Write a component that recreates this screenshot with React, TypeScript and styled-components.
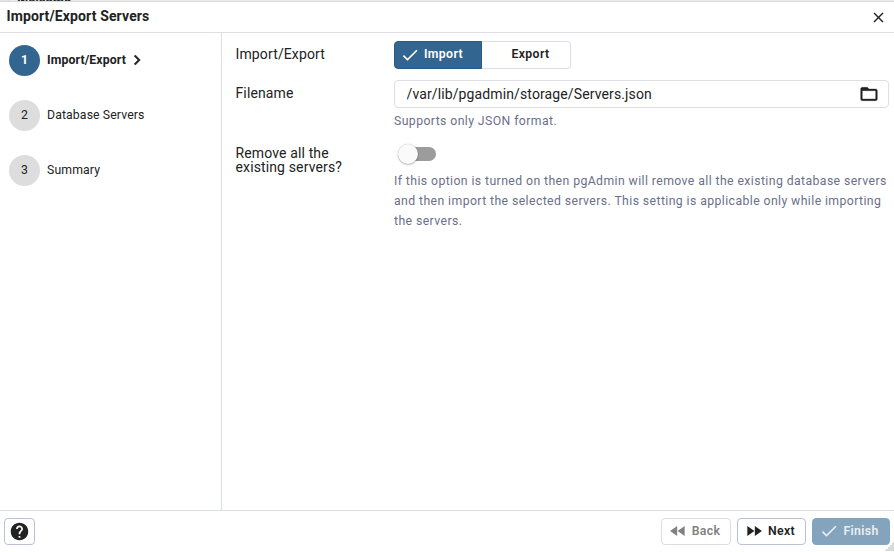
import React from "react";
import styled, { createGlobalStyle } from "styled-components";

const GlobalStyle = createGlobalStyle`
  * { box-sizing: border-box; }
  body { margin: 0; background: #fff; }
  body, button, input { font-family: Roboto, "Liberation Sans", sans-serif; color: #222; }
  button, input { margin: 0; }
`;

const Window = styled.div`
  display: flex;
  flex-direction: column;
  width: 894px;
  height: 552px;
  overflow: hidden;
  background: #fff;
  position: relative;
`;

const TabStrip = styled.div`
  flex: none;
  height: 2px;
  overflow: hidden;
  background: #ebebeb;
  border-bottom: 1px solid #d9dadb;
  display: flex;
`;

const TabEdge = styled.div`
  width: 10px;
  background: #dfe2e8;
`;

const TabTitle = styled.span`
  margin: -4px 0 0 7px;
  font-size: 13px;
  line-height: 12px;
  font-weight: 700;
`;

const Header = styled.header`
  flex: none;
  height: 31px;
  display: flex;
  align-items: center;
  justify-content: space-between;
  padding: 0 7px 2px 6.5px;
  border-bottom: 1px solid #dddfe8;
`;

const Title = styled.div`
  font-size: 14px;
  line-height: 18px;
  font-weight: 700;
  letter-spacing: 0.13px;
`;

const IconButton = styled.button`
  display: flex;
  border: 0;
  padding: 0;
  background: none;
`;

const CloseButton = styled(IconButton)`
  margin-top: 2px;
`;

const Body = styled.main`
  flex: 1;
  min-height: 0;
  display: flex;
`;

const Sidebar = styled.nav`
  flex: none;
  width: 222px;
  border-right: 1px solid #dddfe8;
  padding: 12px 9px;
  display: flex;
  flex-direction: column;
  gap: 24px;
`;

const Step = styled.div<{ $active?: boolean }>`
  height: 31px;
  display: flex;
  align-items: center;
  font-size: 12.25px;
  letter-spacing: 0.12px;
  font-weight: ${(p) => (p.$active ? 700 : 400)};
`;

const StepText = styled.span`
  margin: -2px 0 0 7px;
`;

const StepNumber = styled.span<{ $active?: boolean }>`
  width: 31px;
  height: 31px;
  border-radius: 50%;
  display: flex;
  align-items: center;
  justify-content: center;
  padding-bottom: 2px;
  background: ${(p) => (p.$active ? "#326690" : "#ddd")};
  color: ${(p) => (p.$active ? "#fff" : "#222")};
`;

const StepArrow = styled.span`
  display: flex;
  margin: -1px 0 0 1px;
`;

const Form = styled.section`
  flex: 1;
  padding: 8px 5px 0 13.5px;
`;

const Row = styled.div<{ $gap: number }>`
  display: grid;
  grid-template-columns: 158.5px 1fr;
  margin-bottom: ${(p) => p.$gap}px;
`;

const Label = styled.label<{ $top: number }>`
  font-size: 14px;
  line-height: 14px;
  letter-spacing: 0.13px;
  padding: ${(p) => p.$top}px 30px 0 0;
`;

const ToggleGroup = styled.div`
  display: flex;
  width: 177px;
  height: 28px;
`;

const ToggleButton = styled.button<{ $selected?: boolean }>`
  display: flex;
  align-items: center;
  justify-content: ${(p) => (p.$selected ? "flex-start" : "center")};
  width: ${(p) => (p.$selected ? 88 : 89)}px;
  padding: ${(p) => (p.$selected ? "0 0 2px 5px" : "0 0 2px 9px")};
  border: 1px solid ${(p) => (p.$selected ? "#2c5c84" : "#dddfe8")};
  border-left-width: ${(p) => (p.$selected ? 1 : 0)}px;
  border-radius: ${(p) => (p.$selected ? "4px 0 0 4px" : "0 4px 4px 0")};
  background: ${(p) => (p.$selected ? "#326690" : "#fff")};
  color: ${(p) => (p.$selected ? "#fff" : "#222")};
  font-size: 12.25px;
  font-weight: 600;
  letter-spacing: 0.35px;
  svg { margin: 1px 4px 0 0; }
`;

const FileField = styled.div`
  height: 28px;
  display: flex;
  align-items: center;
  padding: 0 9px 0 11.5px;
  border: 1px solid #dddfe8;
  border-radius: 4px;
`;

const FileInput = styled.input`
  flex: 1;
  min-width: 0;
  border: 0;
  padding: 0;
  outline: 0;
  background: none;
  font-size: 14px;
  letter-spacing: 0.12px;
`;

const FolderButton = styled(IconButton)`
  margin-top: -1px;
`;

const Help = styled.p<{ $top: number }>`
  margin: ${(p) => p.$top}px 0 0;
  font-size: 12.25px;
  line-height: 20px;
  letter-spacing: 0.408px;
  color: #6b6f8a;
`;

const Switch = styled.div`
  display: flex;
  align-items: center;
  width: 34px;
  height: 14px;
  margin: 7px 0 0 8px;
  border-radius: 7px;
  background: #9c9c9c;
`;

const Thumb = styled.div`
  width: 20px;
  height: 20px;
  margin-left: -4px;
  border-radius: 50%;
  background: #fafafa;
  box-shadow: 0 1px 2px rgba(0, 0, 0, 0.25), 0 0 1px rgba(0, 0, 0, 0.3);
`;

const Footer = styled.footer`
  flex: none;
  height: 42px;
  border-top: 1px solid #dddfe8;
  padding: 7px 4px;
  display: flex;
  gap: 6px;
`;

const ActionButton = styled.button<{ $width: number; $kind?: "primary" | "muted" }>`
  width: ${(p) => p.$width}px;
  height: 27px;
  display: flex;
  align-items: center;
  justify-content: center;
  padding: 0;
  border: 1px solid
    ${(p) => (p.$kind === "primary" ? "#84a3bd" : p.$kind === "muted" ? "#dadde5" : "#bac1d5")};
  border-radius: 4px;
  background: ${(p) => (p.$kind === "primary" ? "#84a3bd" : "#fff")};
  color: ${(p) => (p.$kind === "primary" ? "#e9eff4" : p.$kind === "muted" ? "#818181" : "#222")};
  font-size: 12.25px;
  font-weight: 600;
  letter-spacing: 0.35px;
`;

const ActionContent = styled.span`
  display: flex;
  align-items: center;
  gap: 4px;
  margin: -2px 4px 0 0;
  svg { margin-top: 1px; }
`;

const Spacer = styled.div`
  flex: 1;
`;

const ResizeGrip = styled.div`
  position: absolute;
  right: 0;
  bottom: 1px;
  width: 9px;
  height: 9px;
  background: linear-gradient(135deg, transparent 50%, #d9d9d9 50%);
`;

const icons = {
  close:
    "M19 6.41 17.59 5 12 10.59 6.41 5 5 6.41 10.59 12 5 17.59 6.41 19 12 13.41 17.59 19 19 17.59 13.41 12z",
  chevron: "M10 6 8.59 7.41 13.17 12l-4.58 4.59L10 18l6-6z",
  check: "M9 16.17 4.83 12l-1.42 1.41L9 19 21 7l-1.41-1.41z",
  folder:
    "M20 6h-8l-2-2H4c-1.1 0-1.99.9-1.99 2L2 18c0 1.1.9 2 2 2h16c1.1 0 2-.9 2-2V8c0-1.1-.9-2-2-2zm0 12H4V8h16v10z",
  help: "M12 2C6.48 2 2 6.48 2 12s4.48 10 10 10 10-4.48 10-10S17.52 2 12 2zm1 17h-2v-2h2v2zm2.07-7.75-.9.92C13.45 12.9 13 13.5 13 15h-2v-.5c0-1.1.45-2.1 1.17-2.83l1.24-1.26c.37-.36.59-.86.59-1.41 0-1.1-.9-2-2-2s-2 .9-2 2H8c0-2.21 1.79-4 4-4s4 1.79 4 4c0 .88-.36 1.68-.93 2.25z",
  rewind: "M11 18V6l-8.5 6 8.5 6zm.5-6 8.5 6V6l-8.5 6z",
  forward: "m4 18 8.5-6L4 6v12zm9-12v12l8.5-6L13 6z",
};

const Icon = ({ name, size, bold = 0 }: { name: keyof typeof icons; size: number; bold?: number }) => (
  <svg
    width={size}
    height={size}
    viewBox="0 0 24 24"
    fill="currentColor"
    stroke="currentColor"
    strokeWidth={bold}
  >
    <path d={icons[name]} />
  </svg>
);

export default function App() {
  return (
    <Window>
      <GlobalStyle />
      <TabStrip>
        <TabEdge />
        <TabTitle>Welcome</TabTitle>
      </TabStrip>
      <Header>
        <Title>Import/Export Servers</Title>
        <CloseButton aria-label="Close">
          <Icon name="close" size={17} />
        </CloseButton>
      </Header>
      <Body>
        <Sidebar>
          <Step $active>
            <StepNumber $active>1</StepNumber>
            <StepText>Import/Export</StepText>
            <StepArrow>
              <Icon name="chevron" size={20} bold={0.6} />
            </StepArrow>
          </Step>
          <Step>
            <StepNumber>2</StepNumber>
            <StepText>Database Servers</StepText>
          </Step>
          <Step>
            <StepNumber>3</StepNumber>
            <StepText>Summary</StepText>
          </Step>
        </Sidebar>
        <Form>
          <Row $gap={11}>
            <Label $top={6}>Import/Export</Label>
            <ToggleGroup>
              <ToggleButton $selected>
                <Icon name="check" size={20} />
                Import
              </ToggleButton>
              <ToggleButton>Export</ToggleButton>
            </ToggleGroup>
          </Row>
          <Row $gap={9}>
            <Label $top={6}>Filename</Label>
            <div>
              <FileField>
                <FileInput readOnly value="/var/lib/pgadmin/storage/Servers.json" />
                <FolderButton aria-label="Select file">
                  <Icon name="folder" size={20} bold={0.4} />
                </FolderButton>
              </FileField>
              <Help $top={3}>Supports only JSON format.</Help>
            </div>
          </Row>
          <Row $gap={0}>
            <Label $top={6}>Remove all the existing servers?</Label>
            <div>
              <Switch role="switch" aria-checked="false">
                <Thumb />
              </Switch>
              <Help $top={10}>
                If this option is turned on then pgAdmin will remove all the existing database servers
                and then import the selected servers. This setting is applicable only while importing
                the servers.
              </Help>
            </div>
          </Row>
        </Form>
      </Body>
      <Footer>
        <ActionButton $width={31} aria-label="Help">
          <Icon name="help" size={21} />
        </ActionButton>
        <Spacer />
        <ActionButton $width={70} $kind="muted">
          <ActionContent>
            <Icon name="rewind" size={20} />
            Back
          </ActionContent>
        </ActionButton>
        <ActionButton $width={69}>
          <ActionContent>
            <Icon name="forward" size={20} />
            Next
          </ActionContent>
        </ActionButton>
        <ActionButton $width={78} $kind="primary">
          <ActionContent>
            <Icon name="check" size={20} />
            Finish
          </ActionContent>
        </ActionButton>
      </Footer>
      <ResizeGrip />
    </Window>
  );
}
